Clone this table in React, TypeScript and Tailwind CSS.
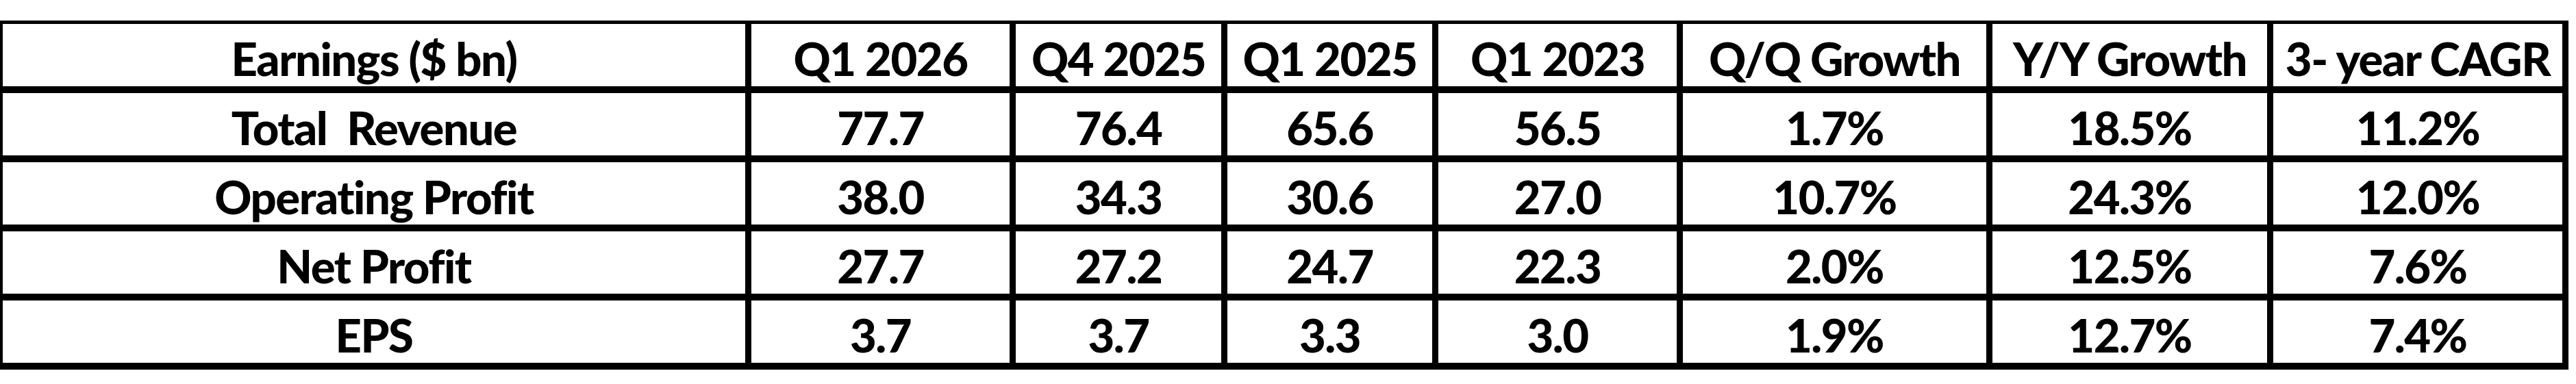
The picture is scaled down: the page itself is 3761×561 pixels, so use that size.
const widths = [
  "w-[1093px]",
  "w-[386px]",
  "w-[309px]",
  "w-[308px]",
  "w-[357px]",
  "w-[452px]",
  "w-[410px]",
  "w-[422px]",
];

const rows: string[][] = [
  ["Earnings ($ bn)", "Q1 2026", "Q4 2025", "Q1 2025", "Q1 2023", "Q/Q Growth", "Y/Y Growth", "3- year CAGR"],
  ["Total  Revenue", "77.7", "76.4", "65.6", "56.5", "1.7%", "18.5%", "11.2%"],
  ["Operating Profit", "38.0", "34.3", "30.6", "27.0", "10.7%", "24.3%", "12.0%"],
  ["Net Profit", "27.7", "27.2", "24.7", "22.3", "2.0%", "12.5%", "7.6%"],
  ["EPS", "3.7", "3.7", "3.3", "3.0", "1.9%", "12.7%", "7.4%"],
];

const App = () => {
  return (
    <div className="w-[3761px] h-[561px] bg-white pt-[30px] font-['Lato','Liberation_Sans',sans-serif] text-black">
      <div className="w-[3750px] border-black border-l-4 border-t-[5px] border-r-[9px]">
        {rows.map((row, r) => (
          <div key={r} className="flex h-[101px] border-b-[10px] border-black">
            {row.map((cell, c) => (
              <div
                key={c}
                className={`${widths[c]} flex items-center justify-center pt-[10px] border-black ${
                  c < row.length - 1 ? "border-r-[9px]" : ""
                }`}
              >
                <span className="text-[67px] font-black leading-none whitespace-pre tracking-[-1.5px]">
                  {cell}
                </span>
              </div>
            ))}
          </div>
        ))}
      </div>
    </div>
  );
};

export default App;
